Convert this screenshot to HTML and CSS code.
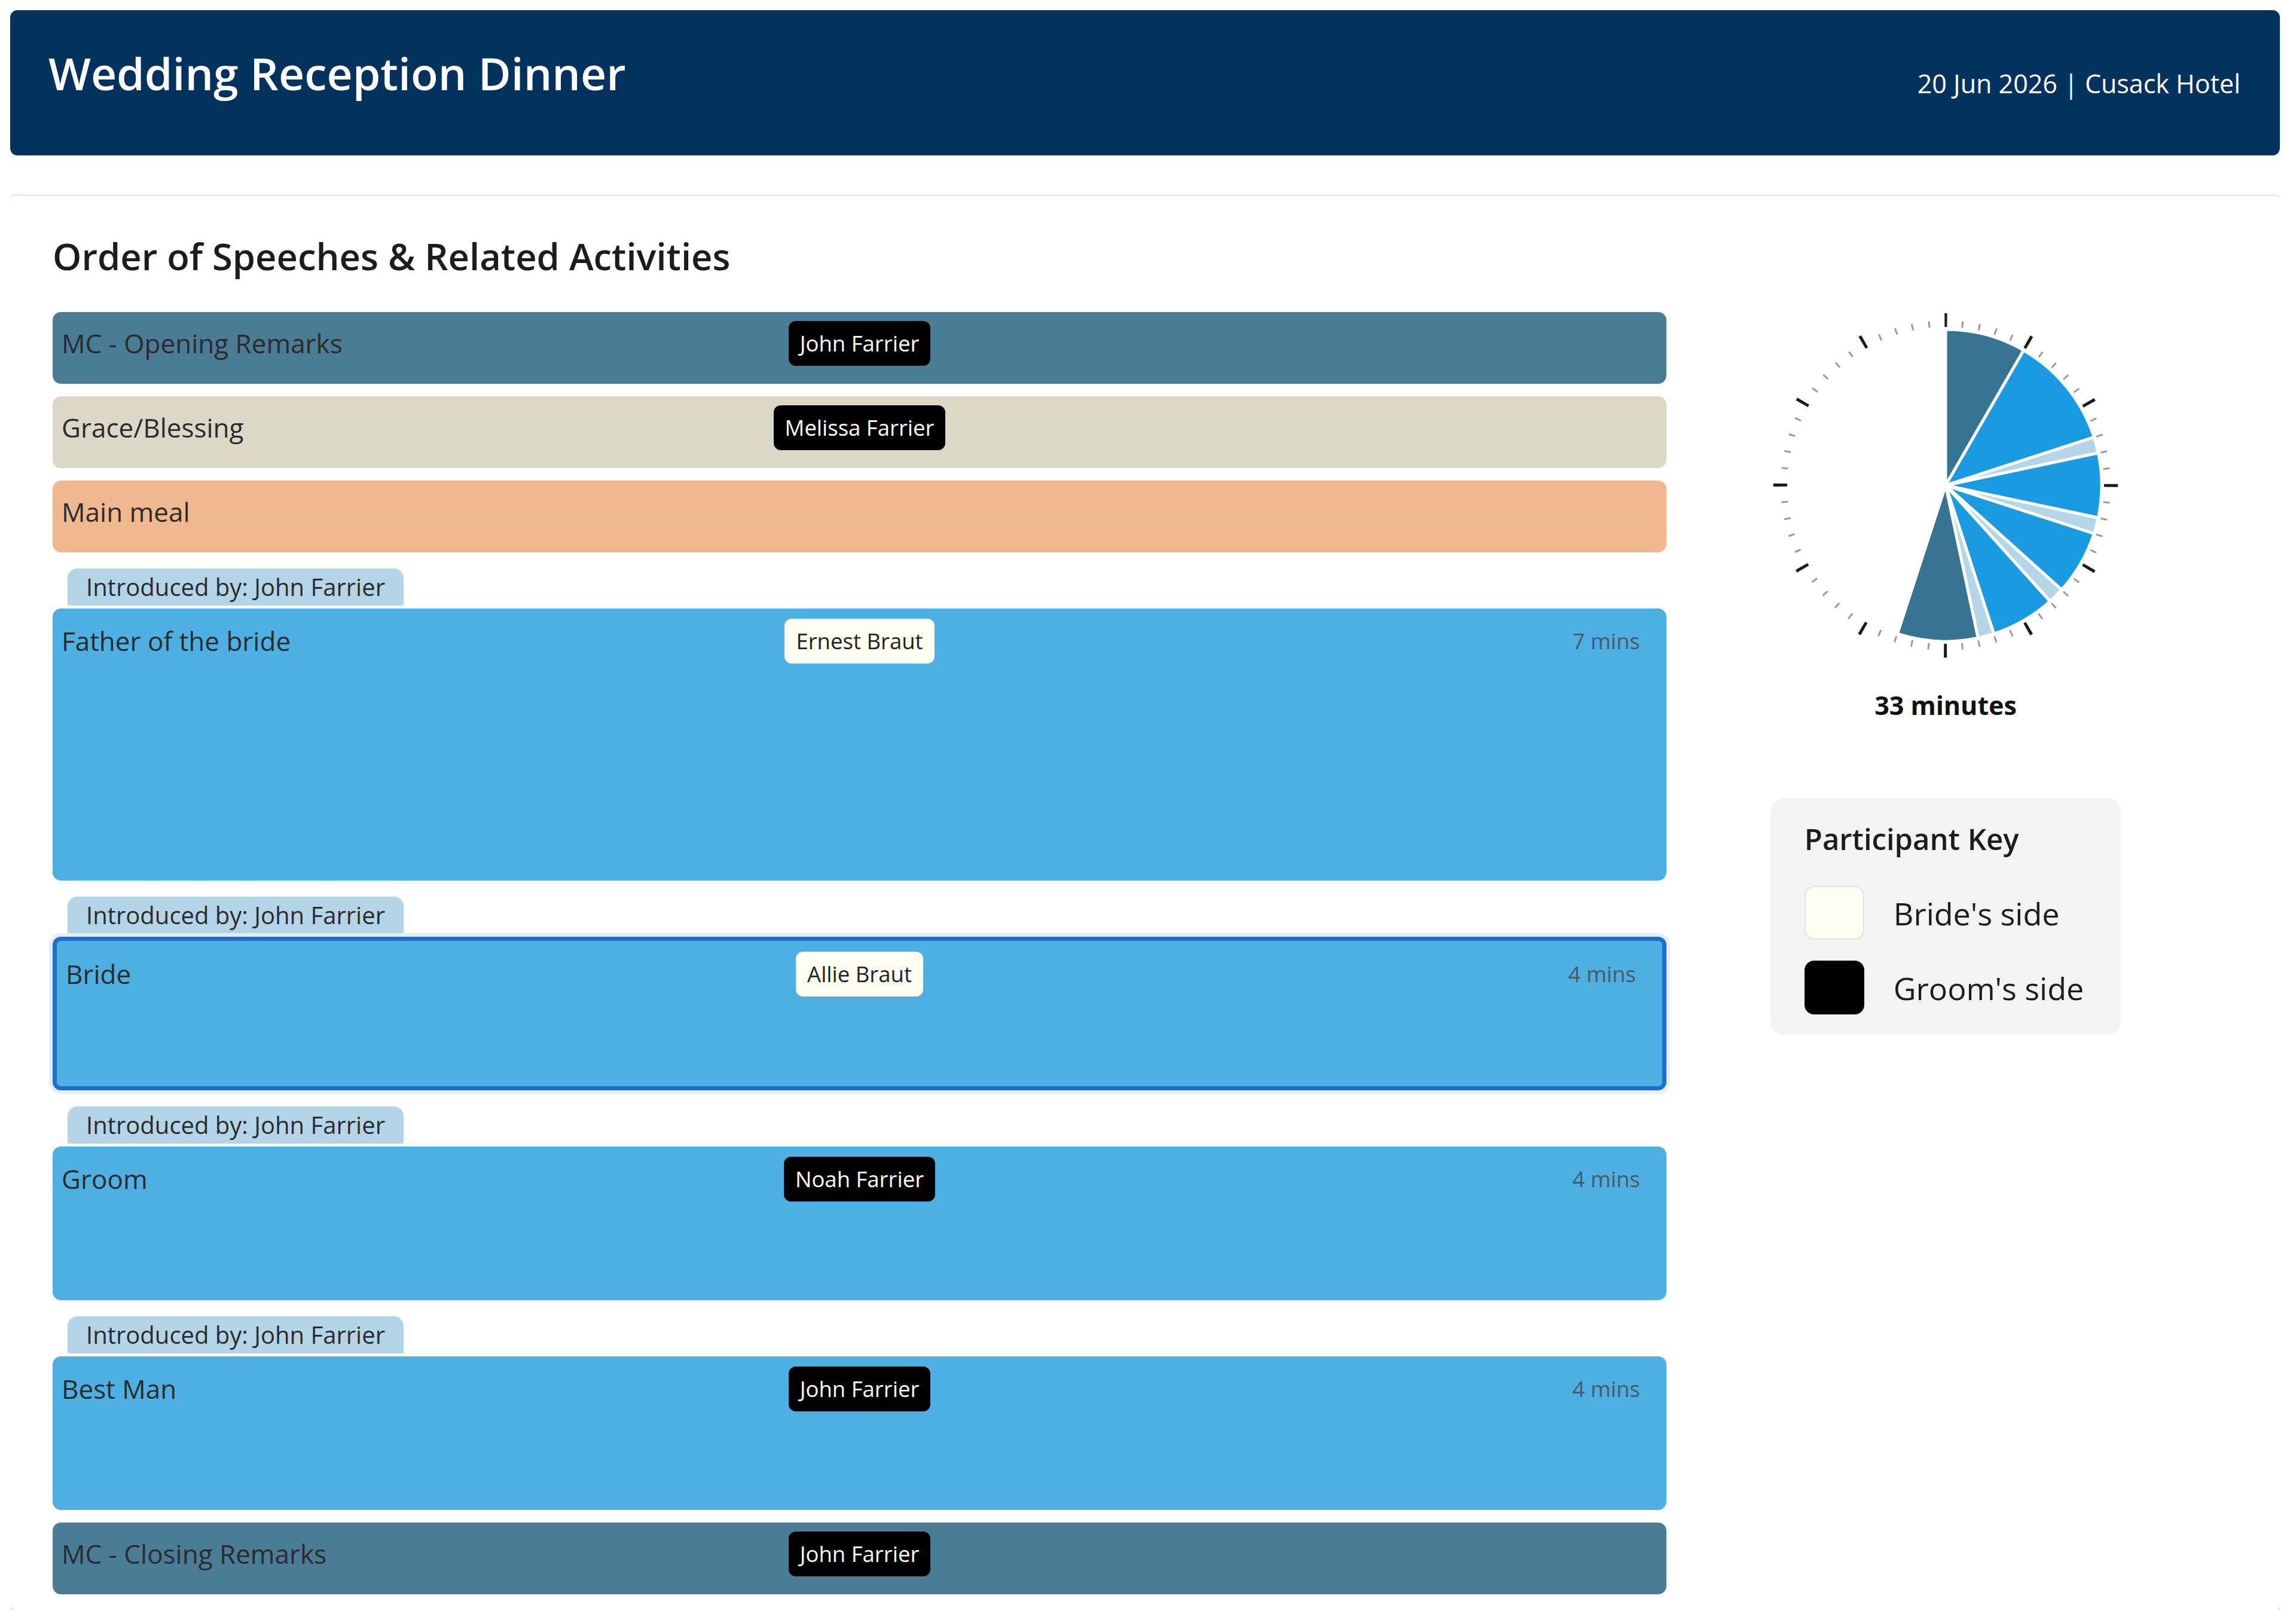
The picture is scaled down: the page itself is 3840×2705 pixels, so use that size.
FILE: index.html
```html
<!DOCTYPE html>
<html lang="en">
<head>
  <meta charset="UTF-8">
  <meta name="viewport" content="width=device-width, initial-scale=1.0">
  <title>Wedding Reception Dinner</title>
  <link rel="stylesheet" href="styles.css">
</head>
<body>
  <header class="event-header">
    <h1 class="event-title">Wedding Reception Dinner</h1>
    <p class="event-meta">20 Jun 2026 | Cusack Hotel</p>
  </header>

  <section class="card">
    <h2 class="card-title">Order of Speeches &amp; Related Activities</h2>

    <div class="card-body">
      <ol class="running-order">
        <li class="slot">
          <div class="bar bar--mc">
            <span class="bar-name">MC - Opening Remarks</span>
            <span class="speaker speaker--groom">John Farrier</span>
          </div>
        </li>
        <li class="slot">
          <div class="bar bar--grace">
            <span class="bar-name">Grace/Blessing</span>
            <span class="speaker speaker--groom">Melissa Farrier</span>
          </div>
        </li>
        <li class="slot">
          <div class="bar bar--meal">
            <span class="bar-name">Main meal</span>
          </div>
        </li>
        <li class="slot slot--speech">
          <div class="intro">Introduced by: John Farrier</div>
          <div class="bar bar--speech" style="height: 455px">
            <span class="bar-name">Father of the bride</span>
            <span class="speaker speaker--bride">Ernest Braut</span>
            <span class="bar-time">7 mins</span>
          </div>
        </li>
        <li class="slot slot--speech">
          <div class="intro">Introduced by: John Farrier</div>
          <div class="bar bar--speech bar--current" style="height: 257px">
            <span class="bar-name">Bride</span>
            <span class="speaker speaker--bride">Allie Braut</span>
            <span class="bar-time">4 mins</span>
          </div>
        </li>
        <li class="slot slot--speech">
          <div class="intro">Introduced by: John Farrier</div>
          <div class="bar bar--speech" style="height: 257px">
            <span class="bar-name">Groom</span>
            <span class="speaker speaker--groom">Noah Farrier</span>
            <span class="bar-time">4 mins</span>
          </div>
        </li>
        <li class="slot slot--speech">
          <div class="intro">Introduced by: John Farrier</div>
          <div class="bar bar--speech" style="height: 257px">
            <span class="bar-name">Best Man</span>
            <span class="speaker speaker--groom">John Farrier</span>
            <span class="bar-time">4 mins</span>
          </div>
        </li>
        <li class="slot">
          <div class="bar bar--mc">
            <span class="bar-name">MC - Closing Remarks</span>
            <span class="speaker speaker--groom">John Farrier</span>
          </div>
        </li>
      </ol>

      <aside class="summary">
        <!-- clock face: one minute per tick, slices run clockwise from 12 -->
        <svg class="clock" width="580" height="580" viewBox="-290 -290 580 580">
          <circle class="ticks ticks--minor" r="270.5" stroke-dasharray="3 25.327" stroke-dashoffset="1.5" transform="rotate(-90)"/>
          <circle class="ticks ticks--major" r="276.5" stroke-dasharray="5 139.78" stroke-dashoffset="2.5" transform="rotate(-90)"/>
          <g class="pie">
            <path class="slice slice--mc" d="M0 0 L0 -261 A261 261 0 0 1 130.5 -226.03 Z"/>
            <path class="slice slice--speech" d="M0 0 L130.5 -226.03 A261 261 0 0 1 248.22 -80.65 Z"/>
            <path class="slice slice--intro" d="M0 0 L248.22 -80.65 A261 261 0 0 1 255.3 -54.27 Z"/>
            <path class="slice slice--speech" d="M0 0 L255.3 -54.27 A261 261 0 0 1 255.3 54.27 Z"/>
            <path class="slice slice--intro" d="M0 0 L255.3 54.27 A261 261 0 0 1 248.22 80.65 Z"/>
            <path class="slice slice--speech" d="M0 0 L248.22 80.65 A261 261 0 0 1 193.96 174.64 Z"/>
            <path class="slice slice--intro" d="M0 0 L193.96 174.64 A261 261 0 0 1 174.64 193.96 Z"/>
            <path class="slice slice--speech" d="M0 0 L174.64 193.96 A261 261 0 0 1 80.65 248.22 Z"/>
            <path class="slice slice--intro" d="M0 0 L80.65 248.22 A261 261 0 0 1 54.27 255.3 Z"/>
            <path class="slice slice--mc" d="M0 0 L54.27 255.3 A261 261 0 0 1 -80.65 248.22 Z"/>
          </g>
        </svg>
        <p class="total">33 minutes</p>

        <div class="legend">
          <h3 class="legend-title">Participant Key</h3>
          <ul class="legend-list">
            <li class="legend-item"><span class="swatch swatch--bride"></span>Bride's side</li>
            <li class="legend-item"><span class="swatch swatch--groom"></span>Groom's side</li>
          </ul>
        </div>
      </aside>
    </div>
  </section>
</body>
</html>
```

FILE: styles.css
```css
* {
  box-sizing: border-box;
}

body {
  margin: 17px 27px 17px 17px;
  font-family: "Open Sans", "Noto Sans", sans-serif;
  color: #2b2b2b;
  background: #fff;
}

/* top banner */
.event-header {
  height: 243px;
  display: flex;
  justify-content: space-between;
  align-items: center;
  padding: 0 66px 0 64px;
  background-color: #03325f;
  color: #fff;
  border-radius: 12px;
}

.event-title {
  margin: 0 0 33px;
  font-size: 75px;
  font-weight: 600;
  line-height: 100px;
}

.event-meta {
  margin: 3px 0 0;
  font-size: 43px;
  line-height: 58px;
}

/* main card */
.card {
  margin-top: 68px;
  padding: 58px 92px 25px 71px;
  background: #fff;
  border-radius: 6px;
  box-shadow: 0 6px 12px rgba(0, 0, 0, 0.24), 0 0 7px rgba(0, 0, 0, 0.16);
}

.card-title {
  margin: 0 0 52px;
  font-size: 61.5px;
  font-weight: 600;
  line-height: 84px;
  color: #1c1c1c;
}

.card-body {
  display: grid;
  grid-template-columns: 2699px 1fr;
  align-items: start;
}

/* running order */
.running-order {
  list-style: none;
  margin: 0;
  padding: 0;
}

.slot {
  margin-top: 21px;
}

.slot:first-child {
  margin-top: 0;
}

.slot--speech {
  margin-top: 27px;
}

.intro {
  width: fit-content;
  height: 62px;
  margin: 0 0 5px 25px;
  padding: 0 31px;
  font-size: 40px;
  line-height: 62px;
  background-color: #b4d5e8;
  border-radius: 16px 16px 0 0;
}

/* name | speaker | duration, speaker stays in the middle of the bar */
.bar {
  display: grid;
  grid-template-columns: 1fr auto 1fr;
  align-items: start;
  height: 120px;
  padding: 15px;
  font-size: 44px;
  border-radius: 14px;
}

.bar--mc {
  background-color: #4a7c96;
}

.bar--grace {
  background-color: #dcd8c7;
}

.bar--meal {
  background-color: #f0b88e;
}

.bar--speech {
  padding-top: 17px;
  background-color: #4eb0e2;
}

.bar--current {
  border: 7px solid #1f6fcb;
  padding-top: 18px;
  box-shadow: 0 0 0 6px #e3f0fb;
}

.bar-name {
  line-height: 75px;
}

.speaker {
  padding: 12px 19px;
  font-size: 36.5px;
  line-height: 51px;
  border-radius: 12px;
}

.speaker--groom {
  background-color: #000;
  color: #fff;
}

.speaker--bride {
  background-color: #fdfdf1;
  color: #222;
}

.bar-time {
  justify-self: end;
  margin-right: 29px;
  font-size: 36.5px;
  line-height: 75px;
  color: #4b5966;
}

/* right hand column */
.summary {
  display: flex;
  flex-direction: column;
  align-items: center;
}

.clock {
  display: block;
}

.ticks {
  fill: none;
}

.ticks--minor {
  stroke: #9a9a9a;
  stroke-width: 11;
}

.ticks--major {
  stroke: #1a1a1a;
  stroke-width: 23;
}

.slice {
  stroke: #fff;
  stroke-width: 5;
  stroke-linejoin: round;
}

.slice--mc {
  fill: #377493;
}

.slice--speech {
  fill: #1a9ae0;
}

.slice--intro {
  fill: #b4d6e8;
}

.total {
  margin: 49px 0 0;
  font-size: 43px;
  font-weight: 700;
  line-height: 58px;
  color: #111;
}

.legend {
  margin-top: 126px;
  padding: 35px 62px 34px 57px;
  background-color: #f4f4f4;
  border-radius: 22px;
}

.legend-title {
  margin: 0 0 45px;
  font-size: 49px;
  font-weight: 600;
  line-height: 67px;
  color: #1c1c1c;
}

.legend-list {
  list-style: none;
  margin: 0;
  padding: 0;
  display: flex;
  flex-direction: column;
  gap: 35px;
}

.legend-item {
  display: flex;
  align-items: center;
  gap: 49px;
  font-size: 52px;
  color: #1c1c1c;
}

.swatch {
  width: 100px;
  height: 90px;
  border-radius: 16px;
}

.swatch--bride {
  background-color: #fdfdf1;
  border: 2px solid #e4e4dc;
}

.swatch--groom {
  background-color: #000;
}
```
